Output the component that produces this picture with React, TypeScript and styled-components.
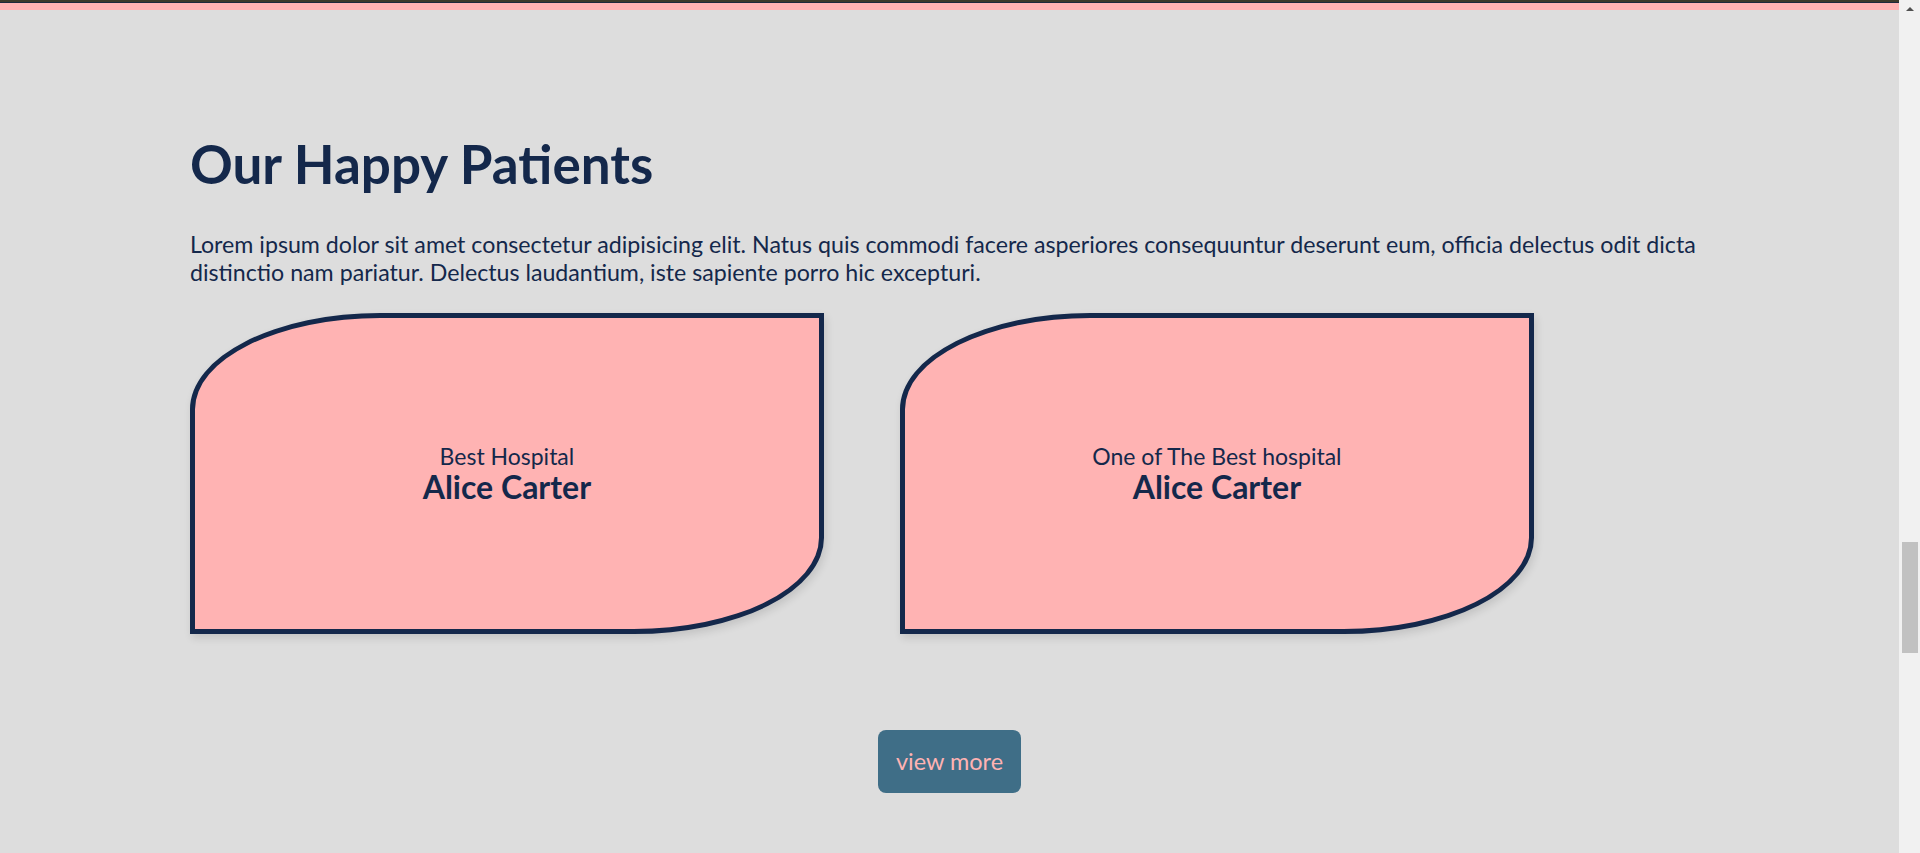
import React from "react";
import styled, { createGlobalStyle } from "styled-components";

const GlobalStyle = createGlobalStyle`
  html, body {
    margin: 0;
    padding: 0;
    height: 100%;
    overflow: hidden;
  }
  body {
    font-family: Lato, "Open Sans", sans-serif;
    background: #dddddd;
  }
  #root {
    height: 100%;
  }
`;

const Page = styled.div`
  display: flex;
  height: 853px;
  width: 100%;
`;

const Main = styled.main`
  flex: 1;
  display: flex;
  flex-direction: column;
  background: #dddddd;
  min-width: 0;
`;

const TopEdge = styled.div`
  height: 2px;
  background: #3b3a2a;
  border-bottom: 1px solid #1c2a3c;
`;

const TopStripe = styled.div`
  height: 7px;
  background: #ffb3b3;
`;

const Section = styled.section`
  width: 80%;
  margin: 0 auto;
  padding-top: 122px;
  display: flex;
  flex-direction: column;
  color: #14284b;
`;

const Heading = styled.h2`
  margin: 0;
  font-size: 53px;
  line-height: 1.2;
  font-weight: 700;
  color: #14284b;
`;

const Intro = styled.p`
  margin: 34px 0 0;
  font-size: 23.2px;
  line-height: 28px;
  color: #14284b;
`;

const CardRow = styled.div`
  display: flex;
  gap: 76px;
  margin-top: 27px;
`;

const Card = styled.article`
  flex: 0 0 634px;
  height: 321px;
  box-sizing: border-box;
  background: #ffb3b3;
  border: 5px solid #14284b;
  border-radius: 30% 0 30% 0 / 30% 0 30% 0;
  box-shadow: 2px 4px 8px rgba(0, 0, 0, 0.12);
  display: flex;
  flex-direction: column;
  align-items: center;
  justify-content: center;
  text-align: center;
`;

const CardCaption = styled.span`
  font-size: 23px;
  line-height: 28px;
  color: #14284b;
`;

const CardName = styled.strong`
  font-size: 32px;
  line-height: 34px;
  font-weight: 700;
  color: #14284b;
`;

const ViewMore = styled.button`
  align-self: center;
  margin-top: 96px;
  height: 63px;
  padding: 0 18px;
  border: none;
  border-radius: 8px;
  background: #3f6e87;
  color: #ffb3b3;
  font-family: Lato, "Open Sans", sans-serif;
  font-size: 23.5px;
  cursor: pointer;
`;

const ScrollRail = styled.div`
  width: 21px;
  flex: 0 0 21px;
  background: #f1f1f1;
  display: flex;
  flex-direction: column;
  align-items: center;
`;

const ScrollArrow = styled.div`
  height: 17px;
  width: 100%;
  display: flex;
  align-items: center;
  justify-content: center;
  &::before {
    content: "";
    width: 0;
    height: 0;
    border-left: 4px solid transparent;
    border-right: 4px solid transparent;
    border-bottom: 4px solid #505050;
  }
`;

const ScrollThumb = styled.div`
  width: 16px;
  height: 111px;
  margin-top: 525px;
  background: #c1c1c1;
`;

const patients = [
  { caption: "Best Hospital", name: "Alice Carter" },
  { caption: "One of The Best hospital", name: "Alice Carter" },
];

export default function App() {
  return (
    <>
      <GlobalStyle />
      <Page>
        <Main>
          <TopEdge />
          <TopStripe />
          <Section>
            <Heading>Our Happy Patients</Heading>
            <Intro>
              Lorem ipsum dolor sit amet consectetur adipisicing elit. Natus quis commodi facere
              asperiores consequuntur deserunt eum, officia delectus odit dicta distinctio nam
              pariatur. Delectus laudantium, iste sapiente porro hic excepturi.
            </Intro>
            <CardRow>
              {patients.map((p, i) => (
                <Card key={i}>
                  <CardCaption>{p.caption}</CardCaption>
                  <CardName>{p.name}</CardName>
                </Card>
              ))}
            </CardRow>
            <ViewMore>view more</ViewMore>
          </Section>
        </Main>
        <ScrollRail>
          <ScrollArrow />
          <ScrollThumb />
        </ScrollRail>
      </Page>
    </>
  );
}
